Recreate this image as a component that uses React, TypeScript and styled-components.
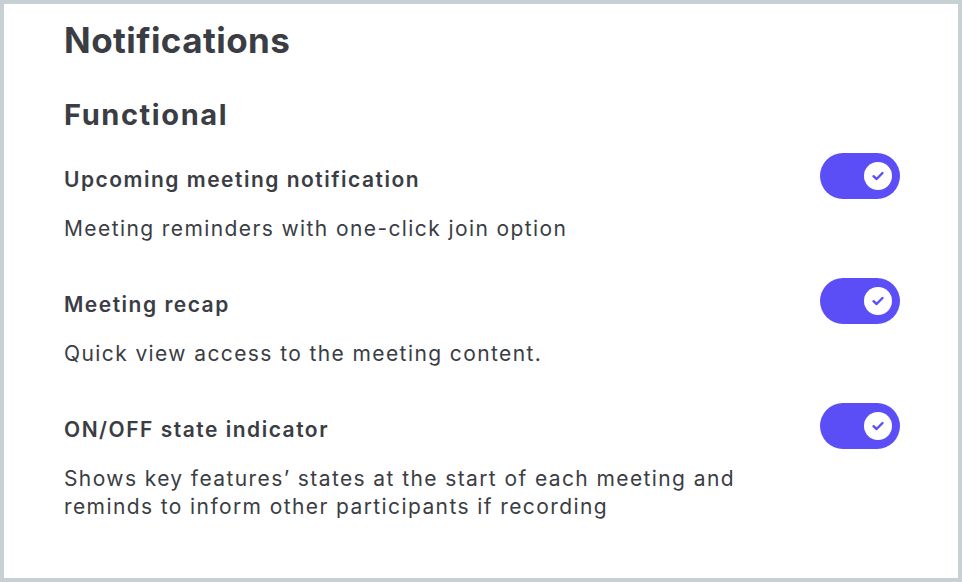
import styled, { createGlobalStyle } from 'styled-components';

const GlobalStyle = createGlobalStyle`
  html, body {
    margin: 0;
    padding: 0;
    background: #ffffff;
  }
  body {
    font-family: Inter, "Noto Sans", sans-serif;
    color: #3a3d44;
  }
`;

const Frame = styled.div`
  box-sizing: border-box;
  width: 962px;
  height: 582px;
  border: 4px solid #c7d0d3;
  background: #ffffff;
  padding: 16px 58px 0 60px;
  display: flex;
  flex-direction: column;
`;

const PageTitle = styled.h1`
  margin: 0;
  font-size: 35px;
  line-height: 40px;
  font-weight: 700;
  letter-spacing: 0.45px;
`;

const SectionTitle = styled.h2`
  margin: 37px 0 0;
  font-size: 29px;
  line-height: 36px;
  font-weight: 700;
  letter-spacing: 1.6px;
`;

const List = styled.div`
  display: flex;
  flex-direction: column;
  gap: 35px;
  margin-top: 20px;
`;

const Item = styled.div`
  display: flex;
  flex-direction: column;
`;

const ItemHeader = styled.div`
  display: flex;
  justify-content: space-between;
  align-items: flex-start;
`;

const ItemTitle = styled.div`
  margin-top: 13px;
  font-size: 21px;
  line-height: 28px;
  font-weight: 600;
  letter-spacing: 1.5px;
`;

const ItemText = styled.p`
  margin: 16px 0 0;
  max-width: 700px;
  font-size: 21px;
  line-height: 28px;
  font-weight: 400;
  letter-spacing: 1.4px;
`;

const Track = styled.button<{ $on: boolean }>`
  width: 80px;
  height: 46px;
  border: none;
  border-radius: 23px;
  padding: 0 8px;
  display: flex;
  align-items: center;
  justify-content: ${p => (p.$on ? 'flex-end' : 'flex-start')};
  background: ${p => (p.$on ? '#5c4ef7' : '#c7d0d3')};
  cursor: pointer;
`;

const Knob = styled.span`
  width: 28px;
  height: 28px;
  border-radius: 50%;
  background: #ffffff;
  display: flex;
  align-items: center;
  justify-content: center;
`;

const Toggle = ({ on }: { on: boolean }) => (
  <Track $on={on} aria-pressed={on}>
    <Knob>
      {on && (
        <svg width="16" height="16" viewBox="0 0 16 16" fill="none">
          <path
            d="M3.5 8.2 L6.6 11 L12.5 5"
            stroke="#5c4ef7"
            strokeWidth="2.4"
            strokeLinecap="round"
            strokeLinejoin="round"
          />
        </svg>
      )}
    </Knob>
  </Track>
);

const items = [
  {
    title: 'Upcoming meeting notification',
    text: 'Meeting reminders with one-click join option',
  },
  {
    title: 'Meeting recap',
    text: 'Quick view access to the meeting content.',
  },
  {
    title: 'ON/OFF state indicator',
    text: 'Shows key features\u2019 states at the start of each meeting and reminds to inform other participants if recording',
  },
];

export default function App() {
  return (
    <>
      <GlobalStyle />
      <Frame>
        <PageTitle>Notifications</PageTitle>
        <SectionTitle>Functional</SectionTitle>
        <List>
          {items.map(item => (
            <Item key={item.title}>
              <ItemHeader>
                <ItemTitle>{item.title}</ItemTitle>
                <Toggle on />
              </ItemHeader>
              <ItemText>{item.text}</ItemText>
            </Item>
          ))}
        </List>
      </Frame>
    </>
  );
}
